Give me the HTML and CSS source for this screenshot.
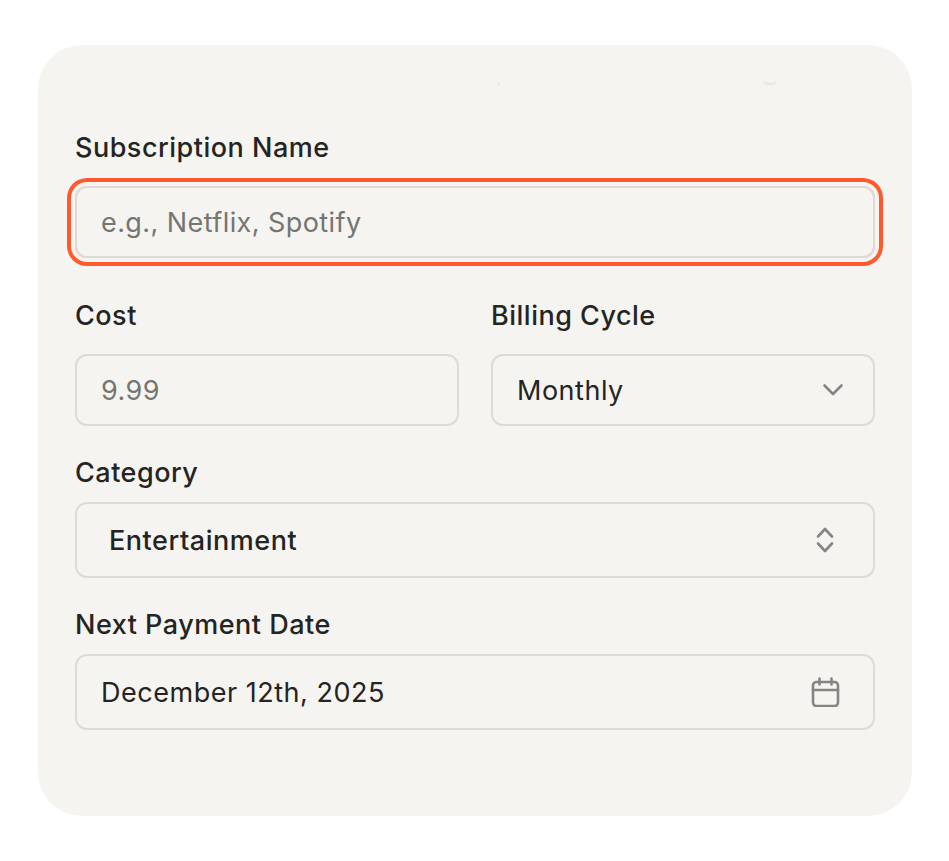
FILE: index.html
```html
<!DOCTYPE html>
<html lang="en">
<head>
  <meta charset="UTF-8" />
  <meta name="viewport" content="width=device-width, initial-scale=1.0"/>
  <title>Add Subscription</title>
  <link rel="stylesheet" href="styles.css">
</head>
<body>

  <form class="card">
    <span class="speck"></span>
    <svg class="smile" width="14" height="5" viewBox="0 0 14 5" fill="none"><path d="M1 1c3 3 9 3 12 0" stroke="#e3e2de" stroke-width="1.6"/></svg>

    <div class="field name-field">
      <label class="label" for="subName">Subscription Name</label>
      <div class="control focused">
        <span class="placeholder" id="subName">e.g., Netflix, Spotify</span>
      </div>
    </div>

    <div class="row">
      <div class="field">
        <label class="label">Cost</label>
        <div class="control">
          <span class="placeholder">9.99</span>
        </div>
      </div>
      <div class="field">
        <label class="label">Billing Cycle</label>
        <div class="control">
          <span>Monthly</span>
          <svg class="icon chevron" width="24" height="24" viewBox="0 0 24 24" fill="none"><path d="M3.5 7.5 12 16l8.5-8.5"/></svg>
        </div>
      </div>
    </div>

    <div class="field tight">
      <label class="label">Category</label>
      <div class="control tall inset">
        <span class="medium">Entertainment</span>
        <svg class="icon updown" width="24" height="28" viewBox="0 0 24 28" fill="none"><path d="M5 10.500 12 3l7 7.500M5 17.500 12 25l7-7.500"/></svg>
      </div>
    </div>

    <div class="field tight">
      <label class="label">Next Payment Date</label>
      <div class="control tall">
        <span>December 12th, 2025</span>
        <svg class="icon calendar" width="30" height="30" viewBox="0 0 30 30" fill="none"><rect x="3" y="5" width="25" height="24" rx="3.500"/><path d="M3 13h25M9.500 1.500v6M21.500 1.500v6"/></svg>
      </div>
    </div>
  </form>

</body>
</html>
```

FILE: styles.css
```css
body { margin: 0; background: #fff; font-family: Inter, "Liberation Sans", sans-serif; color: #242423; }
.card { position: relative; box-sizing: border-box; width: 874px; height: 771px; margin: 45px 0 0 38px; padding: 83px 37px 0; background: #f5f4f0; border-radius: 44px; }
.speck { position: absolute; left: 460px; top: 38px; width: 2px; height: 3px; background: #eceae6; }
.smile { position: absolute; left: 725px; top: 36px; }
.field { display: flex; flex-direction: column; flex: 1; }
.label { font-size: 27px; font-weight: 480; line-height: 40px; margin-bottom: 18px; letter-spacing: 0.5px; }
.row { display: flex; gap: 32px; margin-top: 38px; }
.tight { margin-top: 27px; }
.tight .label { margin-bottom: 9px; }
.control { box-sizing: border-box; height: 72px; display: flex; align-items: center; justify-content: space-between; padding: 0 26px 0 24px; border: 2px solid #dcdbd6; border-radius: 12px; font-size: 27px; letter-spacing: 0.52px; }
.tall { height: 76px; }
.inset { padding-left: 32px; padding-right: 36px; }
.medium { font-weight: 480; letter-spacing: 0.54px; }
.focused { box-shadow: 0 0 0 4px #f5f4f0, 0 0 0 8px #ff5a2e; }
.placeholder { color: #757572; letter-spacing: 0.42px; }
.icon { stroke: #858583; stroke-width: 2.600; stroke-linecap: round; stroke-linejoin: round; flex: none; }
.chevron { margin-right: 2px; }
.calendar { margin-right: 7px; }
```
